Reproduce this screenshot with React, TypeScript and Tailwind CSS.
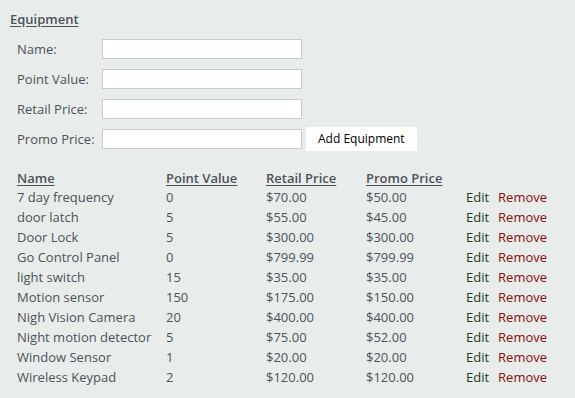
const items = [
  ['7 day frequency', '0', '$70.00', '$50.00'],
  ['door latch', '5', '$55.00', '$45.00'],
  ['Door Lock', '5', '$300.00', '$300.00'],
  ['Go Control Panel', '0', '$799.99', '$799.99'],
  ['light switch', '15', '$35.00', '$35.00'],
  ['Motion sensor', '150', '$175.00', '$150.00'],
  ['Nigh Vision Camera', '20', '$400.00', '$400.00'],
  ['Night motion detector', '5', '$75.00', '$52.00'],
  ['Window Sensor', '1', '$20.00', '$20.00'],
  ['Wireless Keypad', '2', '$120.00', '$120.00'],
];

const fields = ['Name:', 'Point Value:', 'Retail Price:', 'Promo Price:'];

export default function App() {
  return (
    <div className="min-h-[398px] w-[575px] bg-[#e8edeb] px-[10px] pt-[9px] text-[13px] leading-[20px] text-[#4d5259] [font-family:'Open_Sans',sans-serif]">
      <h2 className="font-semibold underline underline-offset-2 text-[#4d5259]">Equipment</h2>
      <div className="mt-[10px] ml-[7px] flex flex-col gap-[10px]">
        {fields.map((f, i) => (
          <div key={f} className="flex items-center h-[20px]">
            <label className="w-[85px]">{f}</label>
            <input className="h-[20px] w-[200px] border border-[#c8cbca] bg-white" />
            {i === 3 && (
              <button className="ml-[4px] h-[24px] bg-white px-[12px] text-[12px] text-black">
                Add Equipment
              </button>
            )}
          </div>
        ))}
      </div>
      <table className="mt-[20px] ml-[7px] border-collapse">
        <thead>
          <tr className="h-[18px] leading-[18px]">
            <th className="w-[149px] p-0 text-left font-semibold underline underline-offset-2">Name</th>
            <th className="w-[100px] p-0 text-left font-semibold underline underline-offset-2">Point Value</th>
            <th className="w-[100px] p-0 text-left font-semibold underline underline-offset-2">Retail Price</th>
            <th className="w-[100px] p-0 text-left font-semibold underline underline-offset-2">Promo Price</th>
            <th className="p-0"></th>
          </tr>
        </thead>
        <tbody>
          {items.map(([name, pts, retail, promo]) => (
            <tr key={name}>
              <td className="p-0">{name}</td>
              <td className="p-0">{pts}</td>
              <td className="p-0">{retail}</td>
              <td className="p-0">{promo}</td>
              <td className="p-0">
                <span className="text-[#1e3a1e]">Edit</span>
                <span className="ml-[9px] text-[#8b0a0a]">Remove</span>
              </td>
            </tr>
          ))}
        </tbody>
      </table>
    </div>
  );
}
